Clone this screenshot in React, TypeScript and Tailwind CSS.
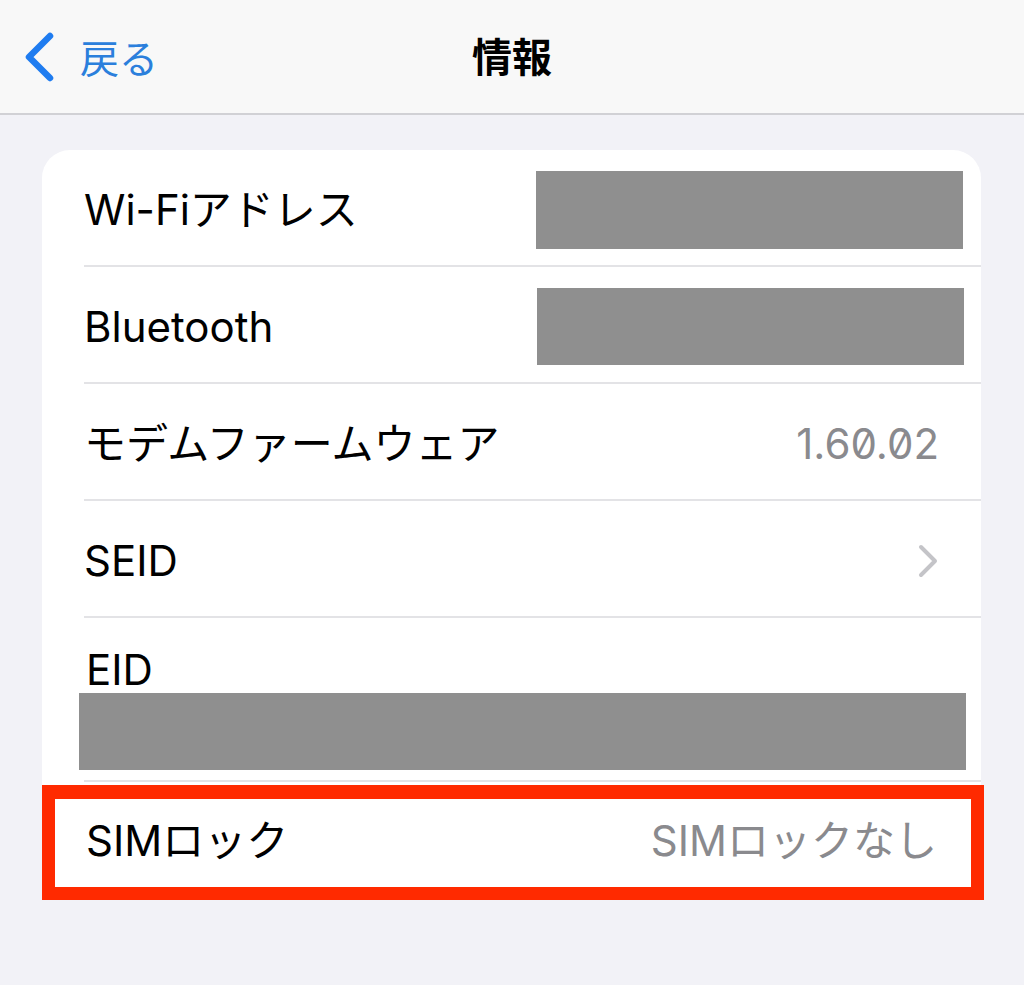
import React from "react";

const font = "font-['Inter','Noto_Sans_CJK_JP',sans-serif]";

function Row({
  label,
  right,
  pr = "pr-[42px]",
}: {
  label: string;
  right?: React.ReactNode;
  pr?: string;
}) {
  return (
    <div className={`ml-[42px] ${pr} h-[117px] border-b-2 border-[#e3e3e6] flex items-center justify-between`}>
      <span className="text-[42px] leading-none text-black mt-[4px]">{label}</span>
      {right}
    </div>
  );
}

export default function App() {
  return (
    <div className={`w-[1024px] h-[985px] bg-[#f2f2f7] ${font} overflow-hidden`}>
      {/* Header */}
      <div className="h-[115px] bg-[#f8f8f8] border-b-2 border-[#d1d1d5] relative flex items-center justify-center">
        <div className="absolute left-[24px] top-0 h-full flex items-center gap-[24px]">
          <svg width="32" height="50" viewBox="0 0 32 50" className="mt-[1px]">
            <path
              d="M26 4 L5 25 L26 46"
              fill="none"
              stroke="#1f7cf0"
              strokeWidth="6.5"
              strokeLinecap="round"
              strokeLinejoin="round"
            />
          </svg>
          <span className="text-[39px] leading-none text-[#2b7fdc] font-['Noto_Sans_CJK_JP',sans-serif]">戻る</span>
        </div>
        <span className="text-[40px] leading-none font-bold text-black font-['Noto_Sans_CJK_JP',sans-serif] mb-[4px]">情報</span>
      </div>

      {/* Card */}
      <div className="mt-[35px] ml-[42px] w-[939px] bg-white rounded-[28px] relative">
        <Row
          label="Wi-Fiアドレス"
          pr="pr-[18px]"
          right={<div className="w-[427px] h-[78px] bg-[#8f8f8f] mt-[4px]" />}
        />
        <Row
          label="Bluetooth"
          pr="pr-[17px]"
          right={<div className="w-[427px] h-[77px] bg-[#8f8f8f] mt-[4px]" />}
        />
        <Row
          label="モデムファームウェア"
          right={
            <span className="text-[42px] leading-none text-[#8a8a8e] mt-[4px] [font-feature-settings:'zero']">
              1.60.02
            </span>
          }
        />
        <Row
          label="SEID"
          right={
            <svg width="22" height="34" viewBox="0 0 22 34" className="mt-[4px]">
              <path
                d="M4 3 L18 17 L4 31"
                fill="none"
                stroke="#c4c4c8"
                strokeWidth="4"
                strokeLinecap="round"
                strokeLinejoin="round"
              />
            </svg>
          }
        />
        {/* EID */}
        <div className="h-[164px] flex flex-col">
          <span className="ml-[44px] mt-[31px] text-[42px] leading-none text-black">EID</span>
          <div className="ml-[37px] mr-[15px] mt-[2px] h-[77px] bg-[#8f8f8f]" />
          <div className="ml-[42px] mt-auto border-b-2 border-[#e3e3e6]" />
        </div>
        {/* SIM lock */}
        <div className="h-[116px] relative">
          <div className="ml-[44px] mr-[44px] h-full flex items-center justify-between">
            <span className="text-[42px] leading-none text-black mt-[2px]">SIMロック</span>
            <span className="text-[42px] leading-none text-[#8a8a8e] mt-[2px]">SIMロックなし</span>
          </div>
          <div className="absolute left-0 right-[-3px] top-[3px] bottom-[-2px] border-[13px] border-t-[14px] border-[#ff2a00]" />
        </div>
      </div>
    </div>
  );
}
